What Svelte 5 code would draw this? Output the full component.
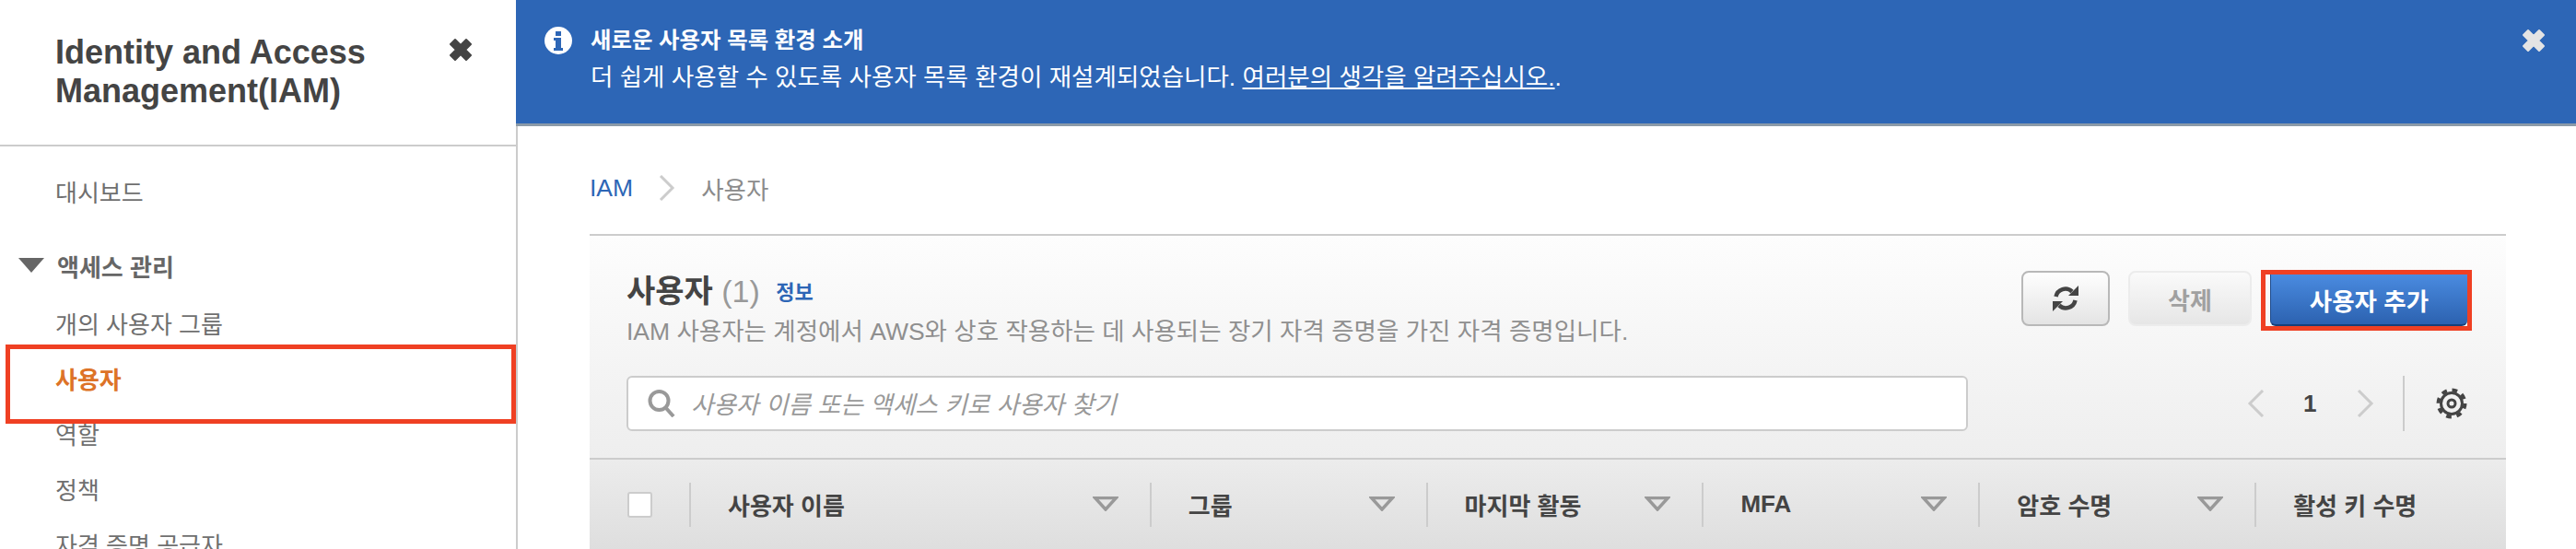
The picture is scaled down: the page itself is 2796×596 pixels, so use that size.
<script lang="ts">
  const columns = [
    { label: '사용자 이름', width: 500 },
    { label: '그룹', width: 300 },
    { label: '마지막 활동', width: 300 },
    { label: 'MFA', width: 300 },
    { label: '암호 수명', width: 300 },
    { label: '활성 키 수명', width: 271 },
  ]
  const navItems = ['개의 사용자 그룹', '사용자', '역할', '정책', '자격 증명 공급자']
  const cross = 'M7 2l6 6 6-6 5 5-6 6 6 6-5 5-6-6-6 6-5-5 6-6-6-6z'
</script>

<div class="page">
  <aside class="sidebar">
    <div class="side-head">
      <h1>Identity and Access<br />Management(IAM)</h1>
      <svg class="side-close" width="26" height="26" viewBox="0 0 26 26">
        <path d={cross} fill="#444" stroke="#444" stroke-width="2" stroke-linejoin="round" />
      </svg>
    </div>
    <nav class="side-nav">
      <div class="nav-link dash">대시보드</div>
      <div class="nav-group">
        <svg width="28" height="16" viewBox="0 0 28 16"><path d="M0 0h28L14 16z" fill="#666" /></svg>
        <span>액세스 관리</span>
      </div>
      {#each navItems as item}
        <div class="nav-link" class:active={item === '사용자'}>{item}</div>
      {/each}
    </nav>
    <div class="mark mark-nav"></div>
  </aside>

  <main class="main">
    <div class="banner">
      <svg class="info" width="30" height="30" viewBox="0 0 30 30">
        <circle cx="15" cy="15" r="15" fill="#fff" />
        <path d="M12 5h6v5h-6zM10 12h8v11h2v3H10v-3h2v-8h-2z" fill="#2d66b6" />
      </svg>
      <div class="banner-text">
        <strong>새로운 사용자 목록 환경 소개</strong>
        <p>더 쉽게 사용할 수 있도록 사용자 목록 환경이 재설계되었습니다. <u>여러분의 생각을 알려주십시오.</u>.</p>
      </div>
      <svg class="banner-close" width="26" height="26" viewBox="0 0 26 26">
        <path d={cross} fill="#e4e4e4" stroke="#e4e4e4" stroke-width="2" stroke-linejoin="round" />
      </svg>
    </div>

    <div class="content">
      <div class="crumbs">
        <span class="crumb-link">IAM</span>
        <svg width="18" height="28" viewBox="0 0 18 28"><path d="M2 1l13 13L2 27" fill="none" stroke="#ccc" stroke-width="3" /></svg>
        <span class="crumb-here">사용자</span>
      </div>

      <section class="panel">
        <div class="panel-top">
          <div class="title-row">
            <div class="titles">
              <h2>사용자 <span class="count">(1)</span> <a class="info-link">정보</a></h2>
              <p>IAM 사용자는 계정에서 AWS와 상호 작용하는 데 사용되는 장기 자격 증명을 가진 자격 증명입니다.</p>
            </div>
            <div class="actions">
              <button class="btn refresh" type="button" aria-label="새로 고침">
                <svg width="28" height="28" viewBox="0 0 28 28">
                  <path d="M3.500 12A10.500 10.500 0 0 1 21 6.500" fill="none" stroke="#444" stroke-width="4.500" />
                  <path d="M28 0v11H17z" fill="#444" />
                  <path d="M24.500 16A10.500 10.500 0 0 1 7 21.500" fill="none" stroke="#444" stroke-width="4.500" />
                  <path d="M0 28V17h11z" fill="#444" />
                </svg>
              </button>
              <button class="btn disabled" type="button">삭제</button>
              <div class="mark-btn"><button class="btn primary" type="button">사용자 추가</button></div>
            </div>
          </div>

          <div class="search-row">
            <div class="search">
              <svg width="30" height="30" viewBox="0 0 30 30">
                <circle cx="12.500" cy="12" r="10" fill="none" stroke="#999" stroke-width="4" />
                <path d="M19 19l9 10" stroke="#999" stroke-width="4" />
              </svg>
              <span>사용자 이름 또는 액세스 키로 사용자 찾기</span>
            </div>
            <div class="pager">
              <svg class="prev" width="20" height="30" viewBox="0 0 20 30"><path d="M18 1L4 15l14 14" fill="none" stroke="#ccc" stroke-width="3" /></svg>
              <span class="page-no">1</span>
              <svg class="next" width="20" height="30" viewBox="0 0 20 30"><path d="M2 1l14 14L2 29" fill="none" stroke="#ccc" stroke-width="3" /></svg>
              <div class="pager-sep"></div>
              <svg class="gear" width="34" height="34" viewBox="0 0 34 34">
                <circle cx="17" cy="17" r="14.500" fill="none" stroke="#444" stroke-width="4" stroke-dasharray="5.700 5.700" />
                <circle cx="17" cy="17" r="11.500" fill="none" stroke="#444" stroke-width="3" />
                <circle cx="17" cy="17" r="4" fill="none" stroke="#444" stroke-width="3" />
              </svg>
            </div>
          </div>
        </div>

        <div class="thead">
          <div class="check-cell"><span class="check"></span></div>
          {#each columns as col, i}
            <div class="th" style="width: {col.width}px">
              <span>{col.label}</span>
              {#if i < columns.length - 1}
                <svg width="28" height="16" viewBox="0 0 28 16"><path d="M2.500 1.500h23L14 14z" fill="none" stroke="#999" stroke-width="3.500" /></svg>
              {/if}
            </div>
          {/each}
        </div>
      </section>
    </div>
  </main>
</div>

<style>
  :global(body) {
    margin: 0;
    background: #fff;
  }

  .page {
    display: flex;
    width: 2796px;
    height: 596px;
    overflow: hidden;
    font-family: "Liberation Sans", "Noto Sans CJK KR", sans-serif;
    color: #444;
  }

  .sidebar {
    position: relative;
    width: 560px;
    flex: none;
  }

  .side-head {
    display: flex;
    justify-content: space-between;
    align-items: flex-start;
    height: 159px;
    box-sizing: border-box;
    padding: 36px 47px 0 60px;
    border-bottom: 2px solid #ccc;
  }

  .side-head h1 {
    margin: 0;
    font-size: 36px;
    line-height: 42px;
    font-weight: 700;
    color: #444;
  }

  .side-close {
    margin-top: 5px;
  }

  .side-nav {
    padding-top: 21px;
  }

  .nav-link {
    height: 60px;
    line-height: 60px;
    padding-left: 60px;
    font-size: 26px;
    color: #6f6f6f;
  }

  .nav-link.dash {
    margin-bottom: 18px;
  }

  .nav-link.active {
    color: #dd7327;
    font-weight: 700;
  }

  .nav-group {
    display: flex;
    align-items: center;
    gap: 14px;
    height: 60px;
    margin-bottom: 5px;
    padding-left: 20px;
    font-size: 26px;
    font-weight: 700;
    color: #666;
  }

  .mark {
    position: absolute;
    box-sizing: border-box;
    border: 5px solid #ef4023;
  }

  .mark-nav {
    left: 6px;
    top: 374px;
    width: 554px;
    height: 86px;
  }

  .main {
    flex: 1;
    min-width: 0;
  }

  .banner {
    display: flex;
    height: 137px;
    box-sizing: border-box;
    padding: 29px 33px 0 31px;
    background: #2d66b6;
    border-bottom: 3px solid #8b9aa8;
    color: #fff;
  }

  .info {
    flex: none;
  }

  .banner-text {
    flex: 1;
    margin-left: 20px;
    font-size: 26.500px;
    line-height: 40px;
  }

  .banner-text strong {
    display: block;
    margin-top: -5px;
    font-size: 24.400px;
  }

  .banner-text p {
    margin: 0;
  }

  .banner-close {
    margin-top: 2px;
  }

  .content {
    padding: 0 76px 0 78px;
    border-left: 2px solid #ccc;
  }

  .crumbs {
    display: flex;
    align-items: center;
    gap: 28px;
    height: 117px;
    box-sizing: border-box;
    padding-top: 17px;
    font-size: 26.500px;
  }

  .crumb-link {
    color: #2d66b6;
  }

  .crumb-here {
    color: #8b8b8b;
  }

  .panel {
    border-top: 2px solid #ccc;
  }

  .panel-top {
    height: 243px;
    box-sizing: border-box;
    padding: 37px 42px 0 40px;
    background: linear-gradient(#fdfdfd, #eeeeee);
    border-bottom: 2px solid #ccc;
  }

  .title-row {
    display: flex;
    justify-content: space-between;
    align-items: flex-start;
    height: 115px;
  }

  .titles {
    margin-top: 1px;
  }

  .titles h2 {
    margin: 0;
    font-size: 34px;
    line-height: 44px;
    font-weight: 700;
    color: #444;
  }

  .count {
    font-weight: 400;
    color: #999;
  }

  .info-link {
    margin-left: 8px;
    font-size: 22px;
    font-weight: 700;
    color: #2d66b6;
    vertical-align: 3px;
  }

  .titles p {
    margin: 4px 0 0;
    font-size: 26.500px;
    line-height: 32px;
    color: #8f8f8f;
  }

  .actions {
    display: flex;
    align-items: flex-start;
    margin-right: -5px;
  }

  .btn {
    height: 60px;
    box-sizing: border-box;
    border-radius: 8px;
    font: 700 26px "Liberation Sans", "Noto Sans CJK KR", sans-serif;
    padding: 0;
  }

  .refresh {
    width: 96px;
    margin-top: 1px;
    border: 2px solid #b8b8b8;
    background: linear-gradient(#fefefe, #e4e4e4);
    display: flex;
    align-items: center;
    justify-content: center;
  }

  .disabled {
    width: 134px;
    margin: 1px 10px 0 20px;
    border: 2px solid #ececec;
    background: linear-gradient(#fafafa, #e6e6e6);
    color: #a0a0a0;
  }

  .mark-btn {
    box-sizing: border-box;
    width: 229px;
    height: 66px;
    padding-left: 5px;
    border: 5px solid #ef4023;
  }

  .primary {
    display: block;
    width: 214px;
    height: 56px;
    border: 0;
    border-left: 1px solid #1d4a8c;
    border-bottom: 2px solid #16407a;
    border-radius: 0 0 6px 6px;
    background: linear-gradient(#4a8be0, #2c62b0);
    color: #fff;
    font-size: 26.500px;
  }

  .search-row {
    display: flex;
    justify-content: space-between;
  }

  .search {
    display: flex;
    align-items: center;
    gap: 17px;
    width: 1456px;
    height: 60px;
    box-sizing: border-box;
    padding-left: 21px;
    background: #fff;
    border: 2px solid #ccc;
    border-radius: 6px;
    font-size: 26.700px;
    font-style: italic;
    color: #999;
  }

  .search span {
    margin-top: -2px;
  }

  .pager {
    display: flex;
    align-items: center;
  }

  .page-no {
    width: 14px;
    margin: 0 44px 0 42px;
    font-size: 26px;
    font-weight: 700;
    color: #444;
  }

  .pager-sep {
    width: 2px;
    height: 60px;
    margin: 0 34px 0 30px;
    background: #ccc;
  }

  .thead {
    display: flex;
    align-items: center;
    height: 98px;
    background: linear-gradient(#ececec, #dedede);
  }

  .check-cell {
    width: 110px;
    height: 48px;
    flex: none;
    box-sizing: border-box;
    padding-left: 41px;
    border-right: 2px solid #ccc;
    display: flex;
    align-items: center;
  }

  .check {
    width: 27px;
    height: 28px;
    box-sizing: border-box;
    background: #fff;
    border: 2px solid #ccc;
    border-radius: 3px;
  }

  .th {
    display: flex;
    align-items: center;
    justify-content: space-between;
    height: 48px;
    box-sizing: border-box;
    padding: 0 34px 2px 40px;
    border-right: 2px solid #ccc;
    font-size: 26px;
    font-weight: 700;
    color: #444;
  }

  .th:last-child {
    border-right: 0;
    padding-right: 0;
  }
</style>
